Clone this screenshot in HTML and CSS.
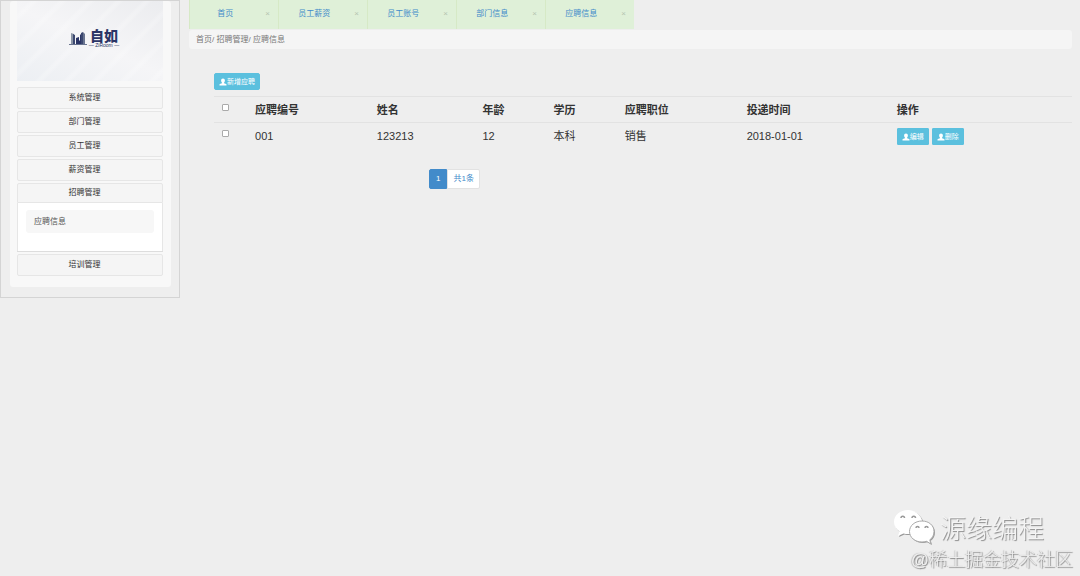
FILE: index.html
```html
<!DOCTYPE html>
<html lang="zh-CN">
<head>
<meta charset="UTF-8">
<meta name="viewport" content="width=device-width, initial-scale=1.0">
<title>应聘信息</title>
<link rel="stylesheet" href="styles.css">
</head>
<body>
<svg width="0" height="0" class="defs" aria-hidden="true">
  <symbol id="user" viewBox="0 0 16 16">
    <path d="M8 1c2.300 0 3.800 1.600 3.800 4 0 1.700-.7 3.300-1.600 4.100v1.200l4.100 1.900c.5.200.7.600.7 1.100V15H1v-1.700c0-.5.200-.9.700-1.100L5.800 10.300V9.100C4.900 8.300 4.200 6.700 4.200 5 4.200 2.600 5.700 1 8 1z"/>
  </symbol>
</svg>

<div class="wrapper">
  <!-- left menu -->
  <aside class="sidebar">
    <div class="sidebar-inner">
      <div class="logo">
        <svg class="logo-icon" viewBox="0 0 18 14" aria-hidden="true">
          <path fill="#8b95a6" d="M2 2l3 1v10H2z"/>
          <path fill="#3c4870" d="M4 3l2 1v9H4zM12 2l2-1v12h-2z"/>
          <path fill="#2b3566" d="M7 7l3-1v3l1 1V4l1-1v10H7z"/>
          <path fill="#69748f" d="M14 1l2 2v10h-2z"/>
          <path stroke="#69748f" d="M0 13.500h18"/>
        </svg>
        <div class="logo-name">
          <strong>自如</strong>
          <small>— ZiRoom —</small>
        </div>
      </div>
      <nav class="menu">
        <button type="button" class="menu-head">系统管理</button>
        <button type="button" class="menu-head">部门管理</button>
        <button type="button" class="menu-head">员工管理</button>
        <button type="button" class="menu-head">薪资管理</button>
        <div class="menu-group">
          <button type="button" class="menu-head open">招聘管理</button>
          <div class="menu-body">
            <a href="#" class="menu-link">应聘信息</a>
          </div>
        </div>
        <button type="button" class="menu-head">培训管理</button>
      </nav>
    </div>
  </aside>

  <main class="content">
    <div class="tabs">
      <div class="tab"><a href="#">首页</a><button type="button" class="close">×</button></div>
      <div class="tab"><a href="#">员工薪资</a><button type="button" class="close">×</button></div>
      <div class="tab"><a href="#">员工账号</a><button type="button" class="close">×</button></div>
      <div class="tab"><a href="#">部门信息</a><button type="button" class="close">×</button></div>
      <div class="tab"><a href="#">应聘信息</a><button type="button" class="close">×</button></div>
    </div>
    <div class="breadcrumb">首页/ 招聘管理/ 应聘信息</div>

    <div class="panel">
      <button type="button" class="btn"><svg class="icon"><use href="#user"/></svg>新增应聘</button>
      <table class="table">
        <thead>
          <tr>
            <th class="col-check"><input type="checkbox" aria-label="全选"></th>
            <th class="col-no">应聘编号</th>
            <th class="col-name">姓名</th>
            <th class="col-age">年龄</th>
            <th class="col-edu">学历</th>
            <th class="col-job">应聘职位</th>
            <th class="col-date">投递时间</th>
            <th>操作</th>
          </tr>
        </thead>
        <tbody>
          <tr>
            <td><input type="checkbox" aria-label="选择 001"></td>
            <td>001</td>
            <td>123213</td>
            <td>12</td>
            <td>本科</td>
            <td>销售</td>
            <td>2018-01-01</td>
            <td>
              <div class="actions">
                <button type="button" class="btn btn-row"><svg class="icon"><use href="#user"/></svg>编辑</button>
                <button type="button" class="btn btn-row"><svg class="icon"><use href="#user"/></svg>删除</button>
              </div>
            </td>
          </tr>
        </tbody>
      </table>
      <div class="pagination">
        <a href="#" class="page active">1</a>
        <a href="#" class="page">共1条</a>
      </div>
    </div>
  </main>
</div>

<!-- watermark in the corner -->
<div class="watermark">
  <div class="wm-top">
    <svg class="wechat" viewBox="0 0 42 36" aria-hidden="true">
      <g fill="#999">
        <path d="M16 2C8 2 2 7 2 14c0 4 2 7 5.500 9.500L6 28l5.500-2.500c2 .5 4 .7 6 .5C30 25 31 17 30 12 28 6 22 2 16 2z"/>
        <path d="M30 13c-7 0-12.500 4.500-12.500 10.500S23 34 30 34c1.500 0 3-.2 4.500-.7L39 36l-1.200-4.200C40.500 30 42 27 42 23.500 42 17.500 37 13 30 13z"/>
      </g>
      <path fill="#fff" d="M15 1C7 1 1 6 1 13c0 4 2 7 5.500 9.500L5 27l5.500-2.500c2 .5 4 .7 6 .5C29 24 30 16 29 11 27 5 21 1 15 1z"/>
      <path fill="#fff" stroke="#aaa" stroke-width="1" d="M29 12c-7 0-12.500 4.500-12.500 10.500S22 33 29 33c1.500 0 3-.2 4.500-.7L38 35l-1.200-4.200C39.500 29 41 26 41 22.500 41 16.500 36 12 29 12z"/>
      <g fill="none" stroke="#999" stroke-width="1.500">
        <path d="M8 9c0-2.500 3.500-2.500 3.500 0M19 9c0-2.500 3.500-2.500 3.500 0M23 19c0-2 3-2 3 0M32 19c0-2 3-2 3 0"/>
      </g>
    </svg>
    <span class="wm-name">源缘编程</span>
  </div>
  <div class="wm-site">@稀土掘金技术社区</div>
</div>
</body>
</html>
```
FILE: styles.css
```css
* {
    box-sizing: border-box;
}

body {
    margin: 0;
    background-color: #eee;
    color: #333;
    font-family: "Liberation Sans", "Noto Sans CJK SC", sans-serif;
    font-size: 8px;
    line-height: 12px;
}

a {
    color: #428bca;
    text-decoration: none;
}

button {
    font-family: inherit;
    font-size: 8px;
    line-height: 12px;
    padding: 0;
    cursor: pointer;
}

.defs {
    position: absolute;
}

.wrapper {
    display: flex;
    align-items: flex-start;
}

/* sidebar */
.sidebar {
    flex: 0 0 180px;
    padding: 0 8px 10px 9px;
    border: 1px solid #d4d4d4;
}

.sidebar-inner {
    padding: 0 8px 11px 7px;
    background-color: #f8f8f8;
    border-radius: 3px;
}

.logo {
    display: flex;
    justify-content: center;
    align-items: center;
    gap: 2px;
    height: 80px;
    padding: 0 0 6px 8px;
    background: repeating-linear-gradient(135deg, transparent 0 8px, rgba(255, 255, 255, 0.2) 11px 13px, transparent 16px 20px), linear-gradient(25deg, #eceff3, #f5f5f7 50%, #ebecef);
}

.logo-icon {
    width: 18px;
    height: 14px;
}

.logo-name {
    display: flex;
    flex-direction: column;
    align-items: center;
    color: #2b3566;
}

.logo-name strong {
    font-size: 14px;
    font-weight: 900;
    line-height: 14px;
}

.logo-name small {
    font-size: 5px;
    line-height: 4px;
}

.menu {
    display: flex;
    flex-direction: column;
    gap: 2px;
    padding-top: 6px;
}

.menu-head {
    width: 100%;
    height: 22px;
    padding-right: 11px;
    border: 1px solid #e6e6e6;
    border-radius: 2px;
    background-color: #f5f5f5;
    color: #333;
}

.menu-group {
    border-bottom: 1px solid #ddd;
}

.menu-head.open {
    height: 20px;
    border-radius: 2px 2px 0 0;
}

.menu-body {
    padding: 7px 8px 18px;
    border: 1px solid #e6e6e6;
    border-width: 0 1px;
    background-color: #fff;
}

.menu-link {
    display: block;
    padding: 6px 8px 5px;
    border-radius: 3px;
    background-color: #f7f7f7;
    color: #555;
}

/* content */
.content {
    flex: 1;
    min-width: 0;
    padding: 0 8px 0 9px;
}

.tabs {
    display: flex;
}

.tab {
    display: flex;
    align-items: center;
    width: 89px;
    height: 29px;
    padding: 0 8px 2px 0;
    border-left: 1px solid #d6e9c6;
    background-color: #dff0d8;
}

.tab a {
    flex: 1;
    padding-right: 5px;
    text-align: center;
}

.close {
    border: 0;
    background: none;
    color: #b5c4b0;
}

.breadcrumb {
    margin-top: 1px;
    padding: 4px 7px 3px;
    border-radius: 3px;
    background-color: #f5f5f5;
    color: #777;
}

.panel {
    padding: 24px 0 0 25px;
}

.btn {
    display: inline-flex;
    align-items: center;
    height: 17px;
    padding: 0 4px;
    border: 1px solid #5bc0de;
    border-radius: 2px;
    background-color: #5bc0de;
    color: #fff;
    font-size: 7px;
}

.icon {
    width: 8px;
    height: 8px;
    fill: #fff;
}

.table {
    width: 100%;
    margin-top: 6px;
    border-collapse: collapse;
    table-layout: fixed;
    font-size: 11px;
    line-height: 16px;
}

.table th,
.table td {
    padding: 5px 5px 4px;
    border-top: 1px solid #e2e2e2;
    text-align: left;
    vertical-align: top;
}

.table input {
    display: block;
    appearance: none;
    width: 7px;
    height: 7px;
    margin: 2px 3px;
    border: 1px solid #aaa;
    border-radius: 1px;
    background-color: #fff;
}

.table input:checked {
    background-color: #428bca;
}

.col-check {
    width: 4.2%;
}

.col-no,
.col-job {
    width: 14.2%;
}

.col-name {
    width: 12.3%;
}

.col-age,
.col-edu {
    width: 8.3%;
}

.col-date {
    width: 17.5%;
}

.actions {
    display: flex;
    gap: 3px;
}

.btn-row {
    border-radius: 1px;
}

.pagination {
    display: flex;
    margin: 20px 0 0 215px;
}

.page {
    padding: 3px 5px;
    border: 1px solid #e2e2e2;
    border-radius: 0 2px 2px 0;
    background-color: #fff;
}

.page.active {
    padding: 3px 6px;
    border-color: #428bca;
    border-radius: 2px 0 0 2px;
    background-color: #428bca;
    color: #fff;
}

/* watermark */
.watermark {
    position: fixed;
    right: 7px;
    bottom: 5px;
    color: #fff;
}

.wm-top {
    display: flex;
    align-items: center;
    gap: 5px;
    padding-right: 29px;
    justify-content: flex-end;
}

.wechat {
    width: 42px;
    height: 36px;
    margin-bottom: 4px;
}

.wm-name {
    color: #f4f4f4;
    font-size: 26px;
    font-weight: 300;
    line-height: 40px;
    text-shadow: 1px 1px 1px #888;
}

.wm-site {
    color: #eee;
    font-size: 18px;
    font-weight: 300;
    line-height: 22px;
    text-align: right;
    text-shadow: 1px 1px 1px #888, -1px 0 1px #bbb;
}
```
